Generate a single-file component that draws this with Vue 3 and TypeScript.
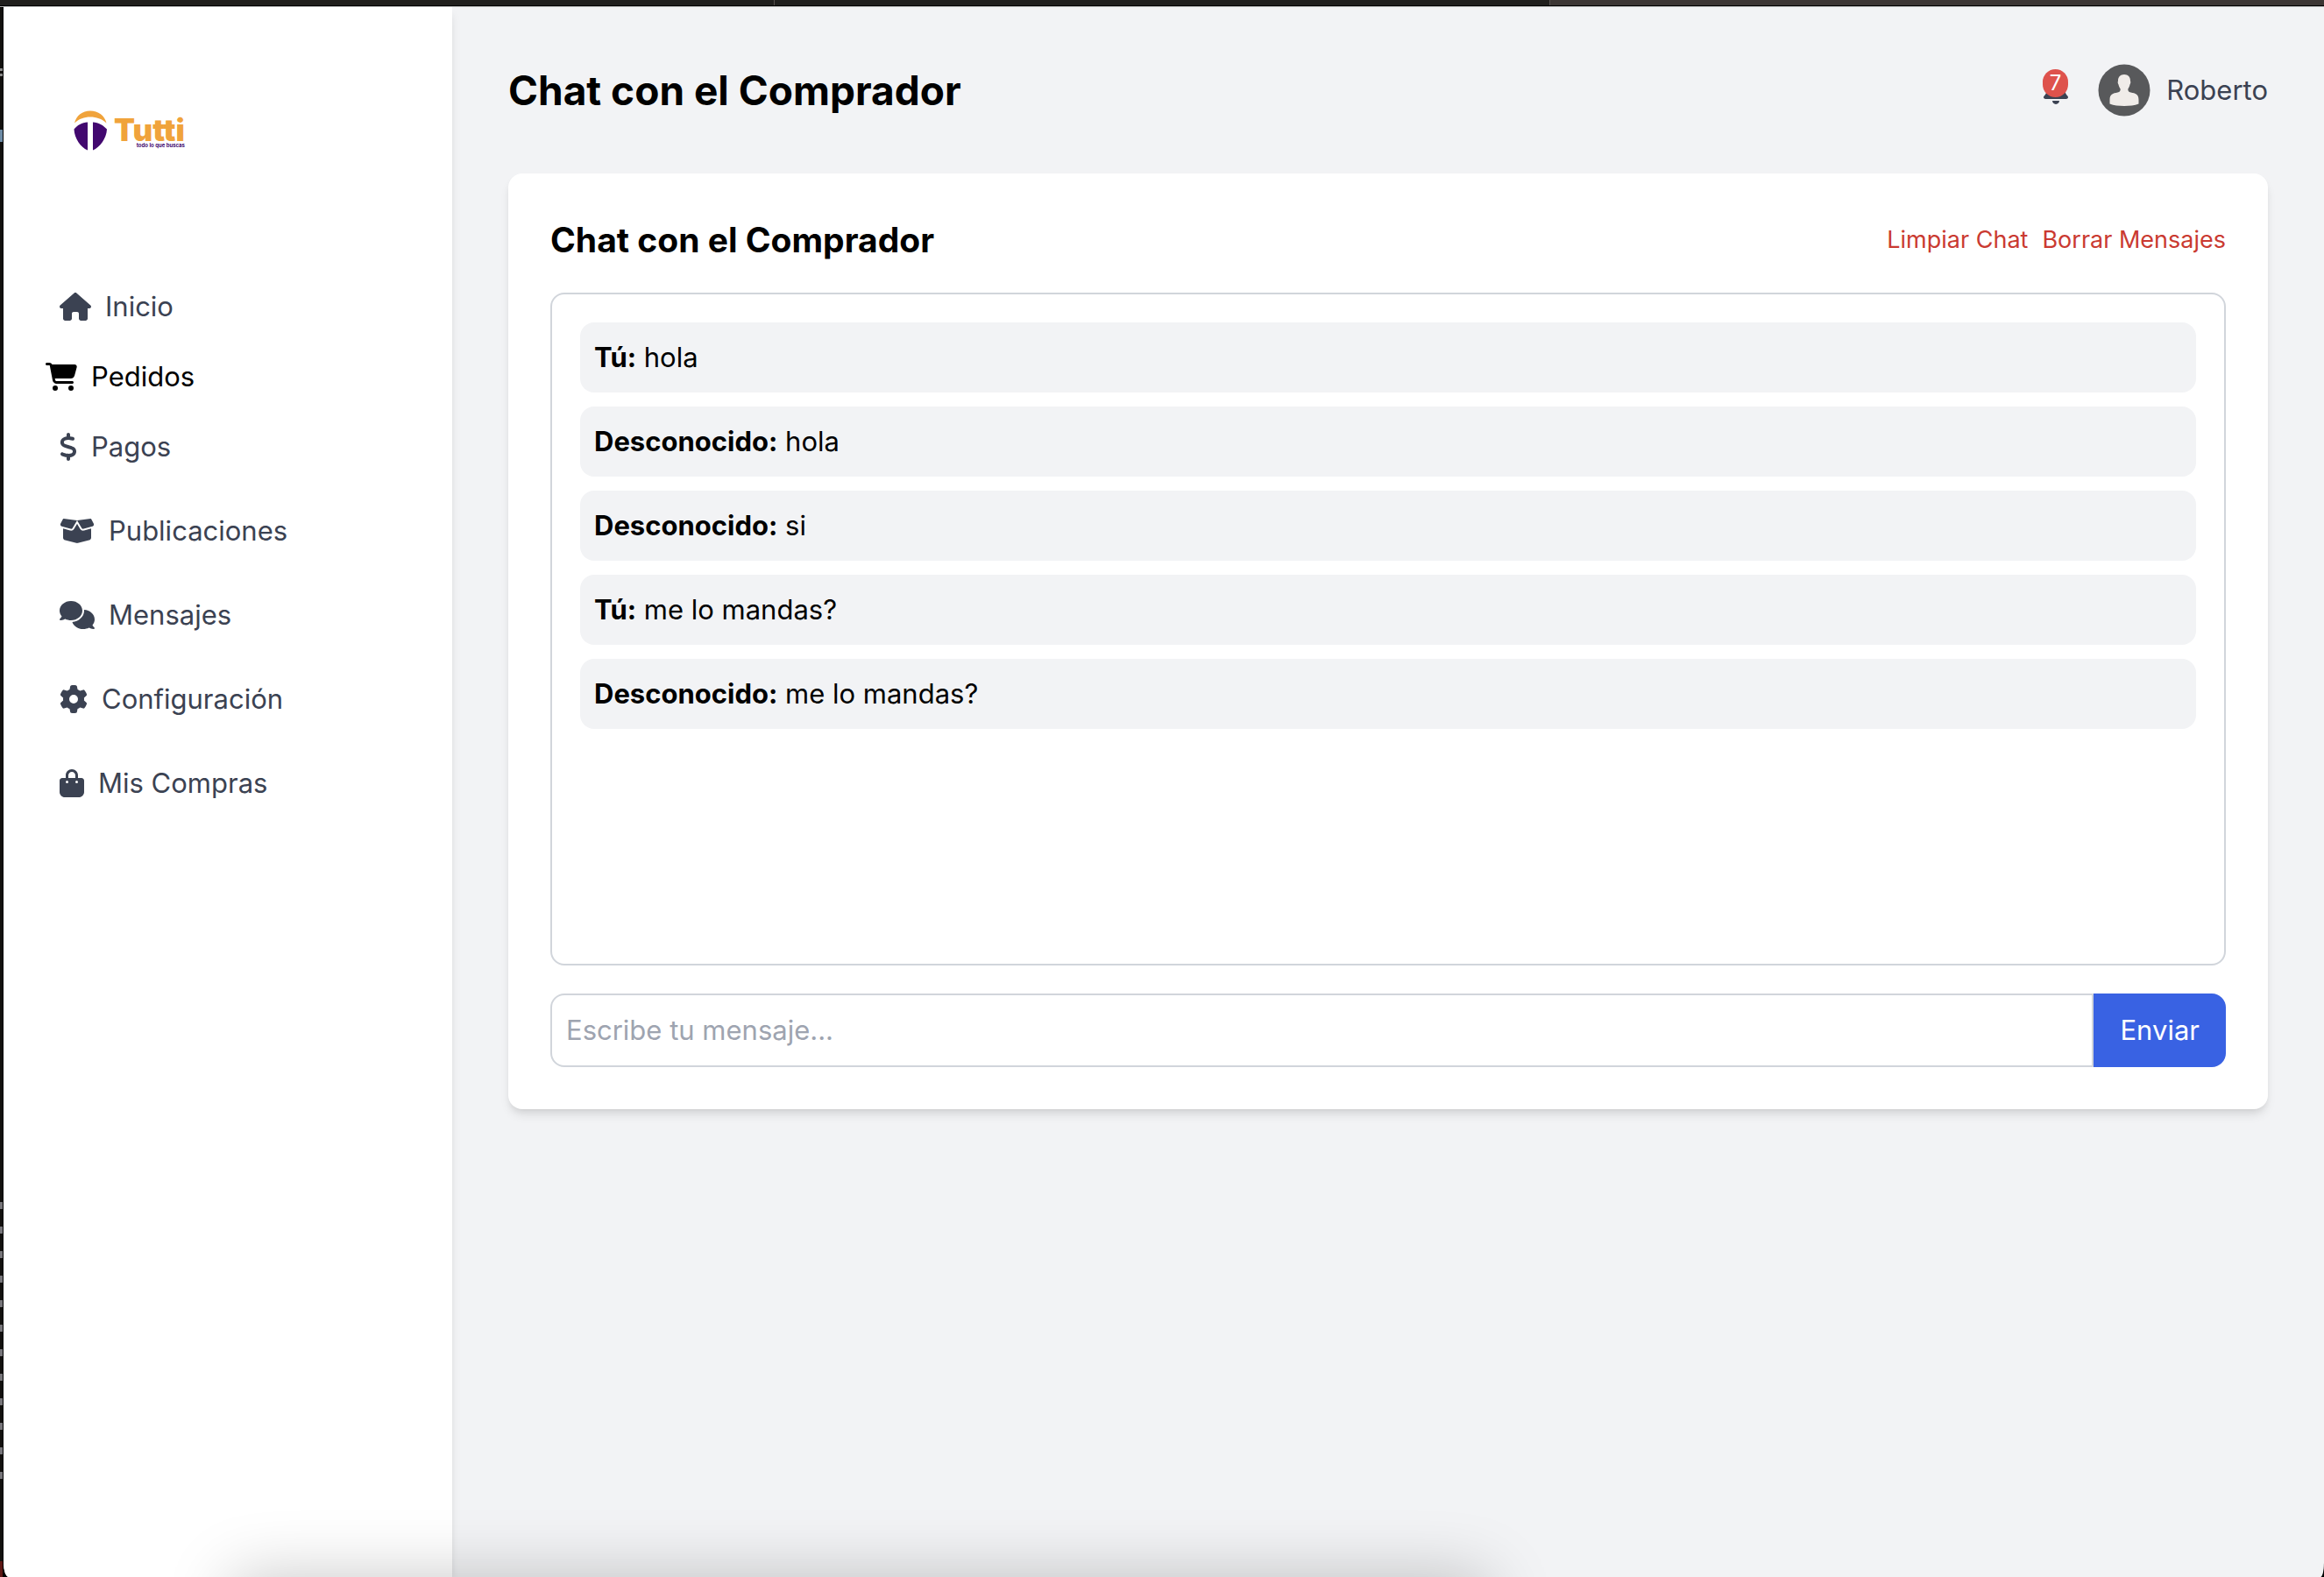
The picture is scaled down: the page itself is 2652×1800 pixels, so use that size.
<script setup lang="ts">
import { ref } from 'vue'

interface NavItem {
  label: string
  width: number
  path: string
  active?: boolean
}

interface Message {
  author: string
  text: string
}

const navItems: NavItem[] = [
  {
    label: 'Inicio',
    width: 576,
    path: 'M575.8 255.5c0 18-15 32.1-32 32.1h-32l.7 160.2c0 2.7-.2 5.4-.5 8.1V472c0 22.1-17.9 40-40 40H456c-1.1 0-2.2 0-3.3-.1c-1.4 .1-2.8 .1-4.2 .1H416 392c-22.1 0-40-17.9-40-40V448 384c0-17.7-14.3-32-32-32H256c-17.7 0-32 14.3-32 32v64 24c0 22.1-17.9 40-40 40H160 128.1c-1.5 0-3-.1-4.5-.2c-1.2 .1-2.4 .2-3.6 .2H104c-22.1 0-40-17.9-40-40V360c0-.9 0-1.9 .1-2.8V287.6H32c-18 0-32-14-32-32.1c0-9 3-17 10-24L266.4 8c7-7 15-8 22-8s15 2 21 7L564.8 231.5c8 7 12 15 11 24z',
  },
  {
    label: 'Pedidos',
    width: 576,
    active: true,
    path: 'M0 24C0 10.7 10.7 0 24 0H69.5c22 0 41.5 12.8 50.6 32h411c26.3 0 45.5 25 38.6 50.4l-41 152.3c-8.5 31.4-37 53.3-69.5 53.3H170.7l5.4 28.5c2.2 11.3 12.1 19.5 23.6 19.5H488c13.3 0 24 10.7 24 24s-10.7 24-24 24H199.7c-34.6 0-64.3-24.6-70.7-58.5L77.4 54.5c-.7-3.8-4-6.5-7.9-6.5H24C10.7 48 0 37.3 0 24zM128 464a48 48 0 1 1 96 0 48 48 0 1 1 -96 0zm336-48a48 48 0 1 1 0 96 48 48 0 1 1 0-96z',
  },
  {
    label: 'Pagos',
    width: 320,
    path: 'M160 0c17.7 0 32 14.3 32 32V67.7c1.6 .2 3.1 .4 4.7 .7c.4 .1 .7 .1 1.1 .2l48 8.8c17.4 3.2 28.9 19.9 25.7 37.2s-19.9 28.9-37.2 25.7l-47.5-8.7c-31.3-4.6-58.9-1.5-78.3 6.2s-27.2 18.3-29 28.1c-2 10.7-.5 16.7 1.2 20.4c1.8 3.9 5.5 8.3 12.8 13.2c16.3 10.7 41.3 17.7 73.7 26.3l2.9 .8c28.6 7.6 63.6 16.8 89.6 33.8c14.2 9.3 27.6 21.9 35.9 39.5c8.5 17.9 10.3 37.9 6.4 59.2c-6.9 38-33.1 63.4-65.6 76.7c-13.7 5.6-28.6 9.2-44.4 11V480c0 17.7-14.3 32-32 32s-32-14.3-32-32V445.1c-.4-.1-.9-.1-1.3-.2l-.2 0 0 0c-24.4-3.8-64.5-14.3-91.5-26.3c-16.1-7.2-23.4-26.1-16.2-42.2s26.1-23.4 42.2-16.2c20.9 9.3 55.3 18.5 75.2 21.6c31.9 4.7 58.2 2 76-5.3c16.9-6.9 24.6-16.9 26.8-28.9c1.9-10.6 .4-16.7-1.3-20.4c-1.9-4-5.6-8.4-13-13.3c-16.4-10.7-41.5-17.7-74-26.3l-2.8-.7 0 0C119.4 279.3 84.4 270 58.4 253c-14.2-9.3-27.5-22-35.8-39.6c-8.4-17.9-10.1-37.9-6.1-59.2C23.7 116 52.3 91.2 84.8 78.3c13.3-5.3 27.9-8.9 43.2-11V32c0-17.7 14.3-32 32-32z',
  },
  {
    label: 'Publicaciones',
    width: 640,
    path: 'M58.9 42.1c3-6.1 9.6-9.6 16.3-8.7L320 64 564.8 33.4c6.7-.8 13.3 2.7 16.3 8.7l41.7 83.4c9 17.9-.6 39.6-19.8 45.1L439.6 217.3c-13.9 4-28.8-1.9-36.2-14.3L320 64 236.6 203c-7.4 12.4-22.3 18.3-36.2 14.3L37.1 170.6c-19.3-5.5-28.8-27.2-19.8-45.1L58.9 42.1zM321.1 128l54.9 91.4c14.9 24.8 44.6 36.6 72.5 28.6L576 211.6v167c0 22-15 41.2-36.4 46.6l-204.1 51c-10.2 2.6-20.9 2.6-31 0l-204.1-51C79 419.7 64 400.5 64 378.5v-167L191.6 248c27.8 8 57.6-3.8 72.5-28.6L318.9 128h2.2z',
  },
  {
    label: 'Mensajes',
    width: 640,
    path: 'M208 352c114.9 0 208-78.8 208-176S322.9 0 208 0S0 78.8 0 176c0 38.6 14.7 74.3 39.6 103.4c-3.5 9.4-8.7 17.7-14.2 24.7c-4.8 6.2-9.7 11-13.3 14.3c-1.8 1.6-3.3 2.9-4.3 3.7c-.5 .4-.9 .7-1.1 .8l-.2 .2 0 0 0 0C1 327.2-1.4 334.4 .8 340.9S9.1 352 16 352c21.8 0 43.8-5.6 62.1-12.5c9.2-3.5 17.8-7.4 25.3-11.4C134.1 343.3 169.8 352 208 352zM448 176c0 112.3-99.1 196.9-216.5 207C255.8 457.4 336.4 512 432 512c38.2 0 73.9-8.7 104.7-23.9c7.5 4 16 7.9 25.2 11.4c18.3 6.9 40.3 12.5 62.1 12.5c6.9 0 13.1-4.5 15.2-11.1c2.1-6.6-.2-13.8-5.8-17.9l0 0 0 0-.2-.2c-.2-.2-.6-.4-1.1-.8c-1-.8-2.5-2-4.3-3.7c-3.6-3.3-8.5-8.1-13.3-14.3c-5.5-7-10.7-15.4-14.2-24.7c24.9-29 39.6-64.7 39.6-103.4c0-92.8-84.9-168.9-192.6-175.5c.4 5.1 .6 10.3 .6 15.5z',
  },
  {
    label: 'Configuración',
    width: 512,
    path: 'M495.9 166.6c3.2 8.7 .5 18.4-6.4 24.6l-43.3 39.4c1.1 8.3 1.7 16.8 1.7 25.4s-.6 17.1-1.7 25.4l43.3 39.4c6.9 6.2 9.6 15.9 6.4 24.6c-4.4 11.9-9.7 23.3-15.8 34.3l-4.7 8.1c-6.6 11-14 21.4-22.1 31.2c-5.9 7.2-15.7 9.6-24.5 6.8l-55.7-17.7c-13.4 10.3-28.2 18.9-44 25.4l-12.5 57.1c-2 9.1-9 16.3-18.2 17.8c-13.8 2.3-28 3.5-42.5 3.5s-28.7-1.2-42.5-3.5c-9.2-1.5-16.2-8.7-18.2-17.8l-12.5-57.1c-15.8-6.5-30.6-15.1-44-25.4L83.1 425.9c-8.8 2.8-18.6 .3-24.5-6.8c-8.1-9.8-15.5-20.2-22.1-31.2l-4.7-8.1c-6.1-11-11.4-22.4-15.8-34.3c-3.2-8.7-.5-18.4 6.4-24.6l43.3-39.4C64.6 273.1 64 264.6 64 256s.6-17.1 1.7-25.4L22.4 191.2c-6.9-6.2-9.6-15.9-6.4-24.6c4.4-11.9 9.7-23.3 15.8-34.3l4.7-8.1c6.6-11 14-21.4 22.1-31.2c5.9-7.2 15.7-9.6 24.5-6.8l55.7 17.7c13.4-10.3 28.2-18.9 44-25.4l12.5-57.1c2-9.1 9-16.3 18.2-17.8C227.3 1.2 241.5 0 256 0s28.7 1.2 42.5 3.5c9.2 1.5 16.2 8.7 18.2 17.8l12.5 57.1c15.8 6.5 30.6 15.1 44 25.4l55.7-17.7c8.8-2.8 18.6-.3 24.5 6.8c8.1 9.8 15.5 20.2 22.1 31.2l4.7 8.1c6.1 11 11.4 22.4 15.8 34.3zM256 336a80 80 0 1 0 0-160 80 80 0 1 0 0 160z',
  },
  {
    label: 'Mis Compras',
    width: 448,
    path: 'M160 112c0-35.3 28.7-64 64-64s64 28.7 64 64v48H160V112zm-48 48H48c-26.5 0-48 21.5-48 48V416c0 53 43 96 96 96H352c53 0 96-43 96-96V208c0-26.5-21.5-48-48-48H336V112C336 50.1 285.9 0 224 0S112 50.1 112 112v48zm24 48a24 24 0 1 1 0 48 24 24 0 1 1 0-48zm152 24a24 24 0 1 1 48 0 24 24 0 1 1 -48 0z',
  },
]

const messages = ref<Message[]>([
  { author: 'Tú', text: 'hola' },
  { author: 'Desconocido', text: 'hola' },
  { author: 'Desconocido', text: 'si' },
  { author: 'Tú', text: 'me lo mandas?' },
  { author: 'Desconocido', text: 'me lo mandas?' },
])

const draft = ref('')

function send(): void {
  const text = draft.value.trim()
  if (!text) return
  messages.value.push({ author: 'Tú', text })
  draft.value = ''
}

function clearChat(): void {
  messages.value = []
}
</script>

<template>
  <div class="desktop">
    <div class="top-edge"><span></span><span></span><span></span></div>
    <div class="body-row">
      <div class="left-edge"></div>
      <div class="window">
        <aside class="sidebar">
          <a class="brand" href="#">
            <svg class="brand-mark" viewBox="0 0 38 46" aria-hidden="true">
              <path fill="#f0a33b" d="M1 14.500C3 6 10 .5 19 .5S35.500 6 37.500 14.500C32 9.500 26 7.500 19 7.500S6.500 9.500 1 14.500z" />
              <path fill="#42086f" d="M16 13.500V45.500C8 42 1 32 .5 21.500C4 17 9.500 14 16 13.500zM22 13.500V45.500C30 42 37.500 32 38 21.500C34 17 28.500 14 22 13.500z" />
            </svg>
            <span class="brand-text">
              <span class="brand-name">Tutti</span>
              <span class="brand-tag">todo lo que buscas</span>
            </span>
          </a>
          <nav>
            <ul class="nav-list">
              <li v-for="item in navItems" :key="item.label">
                <a href="#" class="nav-link" :class="{ active: item.active }">
                  <svg class="icon" :viewBox="`0 0 ${item.width} 512`" aria-hidden="true">
                    <path :d="item.path" />
                  </svg>
                  <span>{{ item.label }}</span>
                </a>
              </li>
            </ul>
          </nav>
        </aside>

        <main class="main">
          <header class="header">
            <h1>Chat con el Comprador</h1>
            <div class="account">
              <button type="button" class="bell" aria-label="Notificaciones">
                <svg class="icon" viewBox="0 0 448 512" aria-hidden="true">
                  <path d="M224 0c-17.7 0-32 14.3-32 32V51.2C119 66 64 130.6 64 208v18.8c0 47-17.3 92.4-48.5 127.6l-7.4 8.3c-8.4 9.4-10.4 22.9-5.3 34.4S19.4 416 32 416H416c12.6 0 24-7.4 29.2-18.9s3.1-25-5.3-34.4l-7.4-8.3C401.3 319.2 384 273.9 384 226.8V208c0-77.4-55-142-128-156.8V32c0-17.7-14.3-32-32-32zm45.3 493.3c12-12 18.7-28.3 18.7-45.3H224 160c0 17 6.7 33.3 18.7 45.3s28.3 18.7 45.3 18.7s33.3-6.7 45.3-18.7z" />
                </svg>
                <span class="badge">7</span>
              </button>
              <a href="#" class="profile">
                <svg class="avatar" viewBox="0 0 64 64" aria-hidden="true">
                  <circle cx="32" cy="32" r="29.500" fill="#58595b" />
                  <path fill="#f0ece9" d="M32 14C36.500 14 39.200 17 39 21.500C39.600 22 39.300 24.500 38.500 25.500C38 28 37 29.500 36.300 30.500C36.300 33 37 34 39.500 34.500C45 35.500 48.500 36.500 48.500 43V47.500C44 49.300 38 50 32 50S20 49.300 15.500 47.500V43C15.500 36.500 19 35.500 24.500 34.500C27 34 27.700 33 27.700 30.500C27 29.500 26 28 25.500 25.500C24.700 24.500 24.400 22 25 21.500C24.800 17 27.500 14 32 14z" />
                </svg>
                <span>Roberto</span>
              </a>
            </div>
          </header>

          <section class="card">
            <div class="card-head">
              <h2>Chat con el Comprador</h2>
              <div class="actions">
                <button type="button" @click="clearChat">Limpiar Chat</button>
                <button type="button" @click="clearChat">Borrar Mensajes</button>
              </div>
            </div>
            <div class="messages">
              <p v-for="(message, index) in messages" :key="index" class="message">
                <strong>{{ message.author }}:</strong> {{ message.text }}
              </p>
            </div>
            <form class="composer" @submit.prevent="send">
              <input v-model="draft" type="text" placeholder="Escribe tu mensaje..." aria-label="Mensaje" />
              <button type="submit">Enviar</button>
            </form>
          </section>
        </main>
      </div>
    </div>
    <div class="dock-shadow"></div>
  </div>
</template>

<style>
body {
  background: #000;
}
</style>

<style scoped>
* {
  box-sizing: border-box;
}

.desktop {
  position: relative;
  display: flex;
  flex-direction: column;
  min-height: 100vh;
  overflow: hidden;
  background: #000;
  color: #000;
  font-family: Inter, "Noto Sans", sans-serif;
  font-size: 31px;
  line-height: 48px;
}

.top-edge {
  display: flex;
  height: 8px;
  border-bottom: 1px solid #a9aaa9;
  background: #000;
}

.top-edge span {
  flex: 1;
  height: 6px;
  border-right: 1px solid #55504e;
  background: #201f1d;
}

.top-edge span:last-child {
  border-right: 0;
  background: #3c3634;
}

.body-row {
  display: flex;
  flex: 1;
}

/* Sliver of the editor window that shows behind the browser */
.left-edge {
  flex: 0 0 4px;
  border-right: 1px solid #000;
  background:
    linear-gradient(transparent 140px, #6d8ba5 140px, #6d8ba5 154px, transparent 154px),
    linear-gradient(transparent 70px, #8a8a8a 70px, #8a8a8a 73px, transparent 73px, transparent 76px, #8a8a8a 76px, #8a8a8a 79px, transparent 79px),
    linear-gradient(#12100e 76%, transparent 76%, transparent 94%, #12100e 94%, #12100e 99%, #5e1714 99%),
    repeating-linear-gradient(#12100e 0, #12100e 20px, #77767a 20px, #77767a 28px);
}

.window {
  display: flex;
  flex: 1;
  overflow: hidden;
  border-radius: 0 0 4px 6px / 0 0 16px 16px;
  background: #f2f3f5;
}

.sidebar {
  flex: 0 0 512px;
  padding: 118px 48px 48px;
  background: #fff;
  box-shadow: 0 8px 12px -2px rgba(0, 0, 0, 0.1), 0 4px 8px -4px rgba(0, 0, 0, 0.1);
}

.brand {
  display: flex;
  gap: 8px;
  height: 48px;
  margin-bottom: 136px;
  padding-left: 32px;
  text-decoration: none;
}

.brand-mark {
  width: 38px;
  height: 46px;
}

.brand-text {
  display: flex;
  flex-direction: column;
  align-items: flex-end;
  padding-top: 8px;
}

.brand-name {
  color: #f0a33b;
  font-size: 35px;
  font-weight: 900;
  line-height: 28px;
}

.brand-tag {
  color: #42086f;
  font-size: 6px;
  font-weight: 700;
  line-height: 8px;
}

.nav-list {
  display: flex;
  flex-direction: column;
  gap: 16px;
  margin: 0;
  padding: 0;
  list-style: none;
}

.nav-link {
  display: flex;
  align-items: center;
  gap: 16px;
  padding: 16px;
  color: #3b4252;
  text-decoration: none;
}

.nav-link.active {
  padding: 0;
  color: #000;
}

.icon {
  display: block;
  height: 32px;
  fill: currentColor;
}

.main {
  flex: 1;
  padding: 63px 64px 64px;
}

.header {
  display: flex;
  align-items: center;
  justify-content: space-between;
  margin-bottom: 63px;
}

h1,
h2 {
  margin: 0;
  font-weight: 700;
}

h1 {
  font-size: 46px;
  line-height: 64px;
}

h2 {
  font-size: 39px;
  line-height: 56px;
}

.account {
  display: flex;
  align-items: center;
  gap: 32px;
}

.bell {
  position: relative;
  padding: 0;
  border: 0;
  background: none;
  color: #3b4252;
}

.badge {
  position: absolute;
  top: -8px;
  right: 0;
  padding: 0 8px;
  border-radius: 16px;
  background: #de524c;
  color: #fff;
  font: 24px/32px Inter, "Noto Sans", sans-serif;
}

.profile {
  display: flex;
  align-items: center;
  gap: 16px;
  color: #3b4252;
  text-decoration: none;
}

.avatar {
  width: 64px;
  height: 64px;
}

.card {
  padding: 48px;
  border-radius: 16px;
  background: #fff;
  box-shadow: 0 8px 12px -2px rgba(0, 0, 0, 0.1), 0 4px 8px -4px rgba(0, 0, 0, 0.1);
}

.card-head {
  display: flex;
  align-items: center;
  justify-content: space-between;
  margin-bottom: 32px;
}

.actions {
  display: flex;
  gap: 16px;
}

.actions button {
  padding: 0;
  border: 0;
  background: none;
  color: #ca3a31;
  font: 27px/40px Inter, "Noto Sans", sans-serif;
}

.messages {
  display: flex;
  flex-direction: column;
  gap: 16px;
  min-height: 768px;
  margin-bottom: 32px;
  padding: 32px;
  border: 2px solid #d1d5db;
  border-radius: 16px;
}

.message {
  margin: 0;
  padding: 16px;
  border-radius: 16px;
  background: #f2f3f5;
}

.composer {
  display: flex;
}

.composer input {
  flex: 1;
  min-width: 0;
  padding: 16px;
  border: 2px solid #d1d5db;
  border-radius: 16px 0 0 16px;
  background: #fff;
  font: 31px/48px Inter, "Noto Sans", sans-serif;
}

.composer input::placeholder {
  color: #9ea4b0;
}

.composer button {
  padding: 16px 30px;
  border: 0;
  border-radius: 0 16px 16px 0;
  background: #3962e3;
  color: #fff;
  font: 31px/48px Inter, "Noto Sans", sans-serif;
}

/* Soft shadow cast by whatever sits below the bottom edge */
.dock-shadow {
  position: absolute;
  bottom: -200px;
  left: 10%;
  width: 54%;
  height: 200px;
  box-shadow: 0 0 76px rgba(0, 0, 0, 0.22);
  pointer-events: none;
}
</style>
